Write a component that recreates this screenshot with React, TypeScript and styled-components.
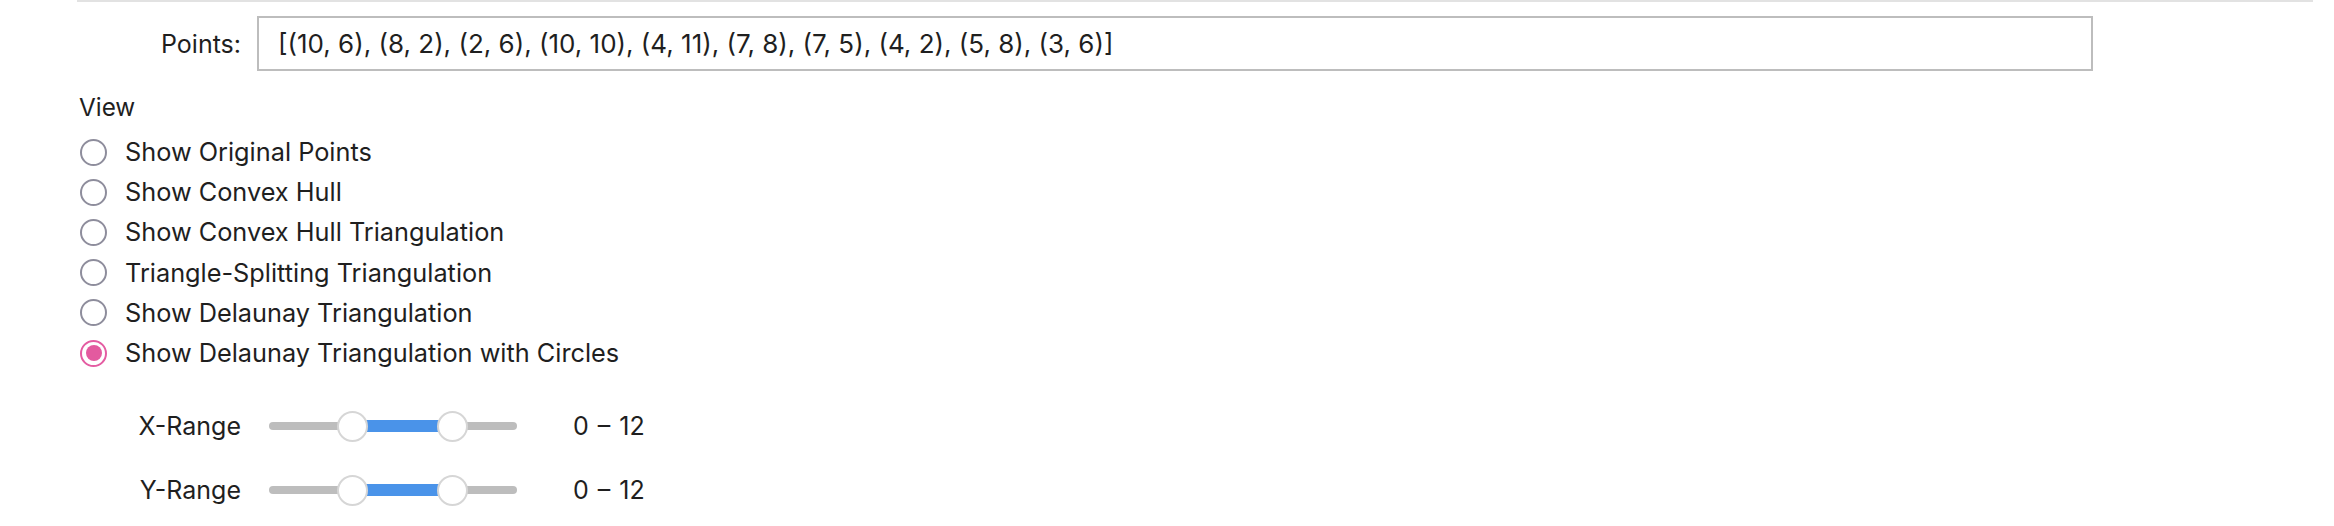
import React, { useState } from "react";
import styled, { createGlobalStyle } from "styled-components";

const Global = createGlobalStyle`
  html, body { margin: 0; padding: 0; background: #ffffff; }
  body { font-family: Inter, "Noto Sans", "Liberation Sans", sans-serif; color: #1f1f1f; }
`;

const Panel = styled.div`
  margin-left: 77px;
  width: 2236px;
  border-top: 2px solid #e2e2e2;
  padding-top: 14px;
  font-size: 25px;
`;

const FieldRow = styled.div`
  display: flex;
  align-items: center;
`;

const FieldLabel = styled.label<{ $gap: number }>`
  width: 164px;
  flex: none;
  text-align: right;
  margin-right: ${(p) => p.$gap}px;
  font-size: 25px;
  color: #1f1f1f;
`;

const PointsInput = styled.input`
  box-sizing: border-box;
  width: 1836px;
  height: 55px;
  border: 2px solid #bdbdbd;
  border-radius: 0;
  padding: 0 0 0 19px;
  font-family: inherit;
  font-size: 26px;
  color: #1f1f1f;
  outline: none;
`;

const SectionTitle = styled.div`
  margin-top: 21px;
  margin-left: 2px;
  line-height: 30px;
  font-size: 24.3px;
`;

const RadioList = styled.div`
  margin-top: 10px;
  display: flex;
  flex-direction: column;
`;

const RadioRow = styled.label`
  display: flex;
  align-items: center;
  height: 40.2px;
  cursor: pointer;
`;

const RadioCircle = styled.span<{ $on: boolean }>`
  box-sizing: border-box;
  width: 27px;
  height: 27px;
  margin-left: 3px;
  margin-right: 18px;
  border-radius: 50%;
  border: ${(p) => (p.$on ? "2.5px solid #e45ca2" : "2px solid #8e8d9c")};
  display: flex;
  align-items: center;
  justify-content: center;
  flex: none;
  &::after {
    content: "";
    display: ${(p) => (p.$on ? "block" : "none")};
    width: 16px;
    height: 16px;
    border-radius: 50%;
    background: #e35a9f;
  }
`;

const RadioText = styled.span`
  font-size: 25.3px;
  line-height: 30px;
`;

const Sliders = styled.div`
  margin-top: 33px;
  display: flex;
  flex-direction: column;
  gap: 24px;
`;

const SliderRow = styled.div`
  display: flex;
  align-items: center;
  height: 40px;
`;

const Track = styled.div`
  position: relative;
  width: 248px;
  height: 8px;
  border-radius: 4px;
  background: #bdbdbd;
  flex: none;
`;

const Fill = styled.div`
  position: absolute;
  top: -2px;
  height: 12px;
  background: #4a93e9;
`;

const Thumb = styled.div`
  position: absolute;
  top: 50%;
  box-sizing: border-box;
  width: 31px;
  height: 31px;
  margin-left: -15.5px;
  margin-top: -15.5px;
  border-radius: 50%;
  background: #ffffff;
  border: 2px solid #d6d6d6;
`;

const RangeValue = styled.span`
  margin-left: 56px;
  font-size: 25px;
  word-spacing: 2px;
`;

const options = [
  "Show Original Points",
  "Show Convex Hull",
  "Show Convex Hull Triangulation",
  "Triangle-Splitting Triangulation",
  "Show Delaunay Triangulation",
  "Show Delaunay Triangulation with Circles",
];

const RangeSlider = ({ label, lo, hi }: { label: string; lo: number; hi: number }) => (
  <SliderRow>
    <FieldLabel $gap={28}>{label}</FieldLabel>
    <Track>
      <Fill style={{ left: `${lo * 100}%`, width: `${(hi - lo) * 100}%` }} />
      <Thumb style={{ left: `${lo * 100}%` }} />
      <Thumb style={{ left: `${hi * 100}%` }} />
    </Track>
    <RangeValue>0 – 12</RangeValue>
  </SliderRow>
);

export default function App() {
  const [sel, setSel] = useState(5);
  return (
    <>
      <Global />
      <Panel>
        <FieldRow>
          <FieldLabel $gap={16}>Points:</FieldLabel>
          <PointsInput
            readOnly
            value="[(10, 6), (8, 2), (2, 6), (10, 10), (4, 11), (7, 8), (7, 5), (4, 2), (5, 8), (3, 6)]"
          />
        </FieldRow>
        <SectionTitle>View</SectionTitle>
        <RadioList>
          {options.map((o, i) => (
            <RadioRow key={o} onClick={() => setSel(i)}>
              <RadioCircle $on={sel === i} />
              <RadioText>{o}</RadioText>
            </RadioRow>
          ))}
        </RadioList>
        <Sliders>
          <RangeSlider label="X-Range" lo={0.335} hi={0.738} />
          <RangeSlider label="Y-Range" lo={0.335} hi={0.738} />
        </Sliders>
      </Panel>
    </>
  );
}
